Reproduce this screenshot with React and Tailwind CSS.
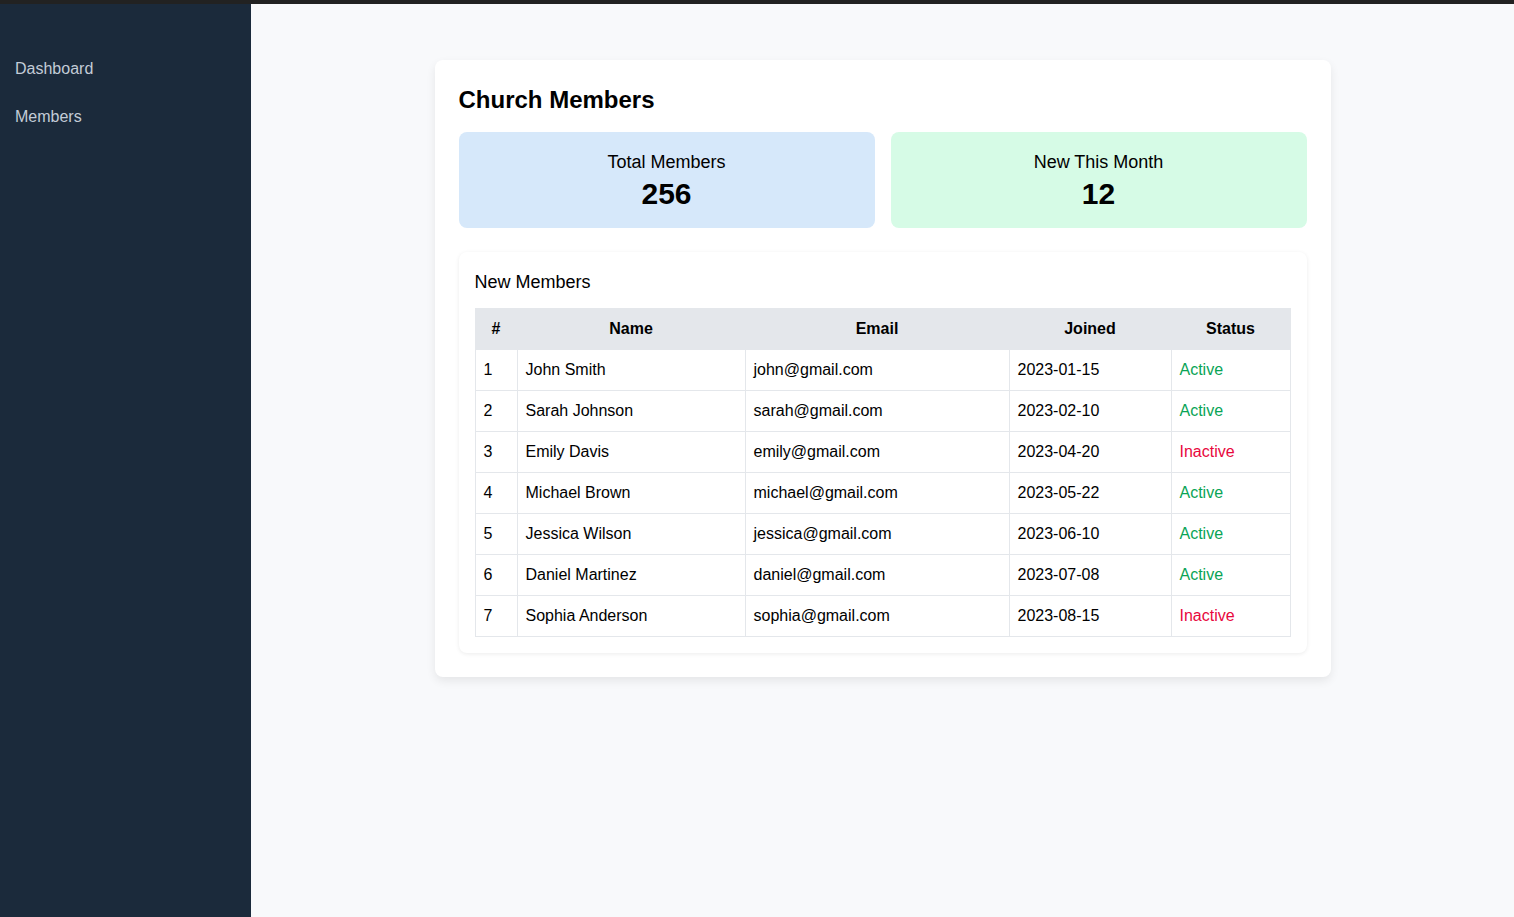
import React from "react";

const members = [
  [1, "John Smith", "john@gmail.com", "2023-01-15", "Active"],
  [2, "Sarah Johnson", "sarah@gmail.com", "2023-02-10", "Active"],
  [3, "Emily Davis", "emily@gmail.com", "2023-04-20", "Inactive"],
  [4, "Michael Brown", "michael@gmail.com", "2023-05-22", "Active"],
  [5, "Jessica Wilson", "jessica@gmail.com", "2023-06-10", "Active"],
  [6, "Daniel Martinez", "daniel@gmail.com", "2023-07-08", "Active"],
  [7, "Sophia Anderson", "sophia@gmail.com", "2023-08-15", "Inactive"],
];

export default function App() {
  return (
    <div className="min-h-[917px] flex flex-col font-['Liberation_Sans',Arial,sans-serif] text-black">
      <div className="h-[4px] bg-[#222222]" />
      <div className="flex flex-1">
        <aside className="w-[251px] bg-[#1b2a3b] pt-[53px] flex flex-col gap-[24px]">
          <div className="px-[15px] text-[16px] leading-[24px] text-[#c3ccd7]">Dashboard</div>
          <div className="px-[15px] text-[16px] leading-[24px] text-[#c3ccd7]">Members</div>
        </aside>
        <main className="flex-1 bg-[#f8f9fb] pt-[56px]">
          <div className="mx-auto w-[896px] bg-white rounded-lg shadow-[0_4px_10px_rgba(0,0,0,0.08)] p-6">
            <h1 className="text-2xl font-bold leading-8 mb-4">Church Members</h1>
            <div className="grid grid-cols-2 gap-4 mb-6">
              <div className="bg-[#d6e8fa] rounded-lg p-4 text-center">
                <div className="text-lg leading-7">Total Members</div>
                <div className="text-3xl leading-9 font-bold">256</div>
              </div>
              <div className="bg-[#d6fbe6] rounded-lg p-4 text-center">
                <div className="text-lg leading-7">New This Month</div>
                <div className="text-3xl leading-9 font-bold">12</div>
              </div>
            </div>
            <div className="bg-white rounded-lg shadow-[0_1px_4px_rgba(0,0,0,0.08)] p-4">
              <h2 className="text-lg leading-7 mb-3">New Members</h2>
              <table className="w-[815px] table-fixed border-collapse text-[16px] leading-[24px]">
                <colgroup>
                  <col className="w-[42px]" />
                  <col className="w-[228px]" />
                  <col className="w-[264px]" />
                  <col className="w-[162px]" />
                  <col className="w-[119px]" />
                </colgroup>
                <thead>
                  <tr className="bg-[#e4e7eb]">
                    {["#", "Name", "Email", "Joined", "Status"].map((h) => (
                      <th key={h} className="border border-[#e4e7eb] px-2 py-2 font-bold text-center">
                        {h}
                      </th>
                    ))}
                  </tr>
                </thead>
                <tbody>
                  {members.map((m) => (
                    <tr key={m[0]}>
                      <td className="border border-[#e4e7eb] px-2 py-2">{m[0]}</td>
                      <td className="border border-[#e4e7eb] px-2 py-2">{m[1]}</td>
                      <td className="border border-[#e4e7eb] px-2 py-2">{m[2]}</td>
                      <td className="border border-[#e4e7eb] px-2 py-2">{m[3]}</td>
                      <td
                        className={
                          "border border-[#e4e7eb] px-2 py-2 " +
                          (m[4] === "Active" ? "text-[#0aa456]" : "text-[#e8073d]")
                        }
                      >
                        {m[4]}
                      </td>
                    </tr>
                  ))}
                </tbody>
              </table>
            </div>
          </div>
        </main>
      </div>
    </div>
  );
}
